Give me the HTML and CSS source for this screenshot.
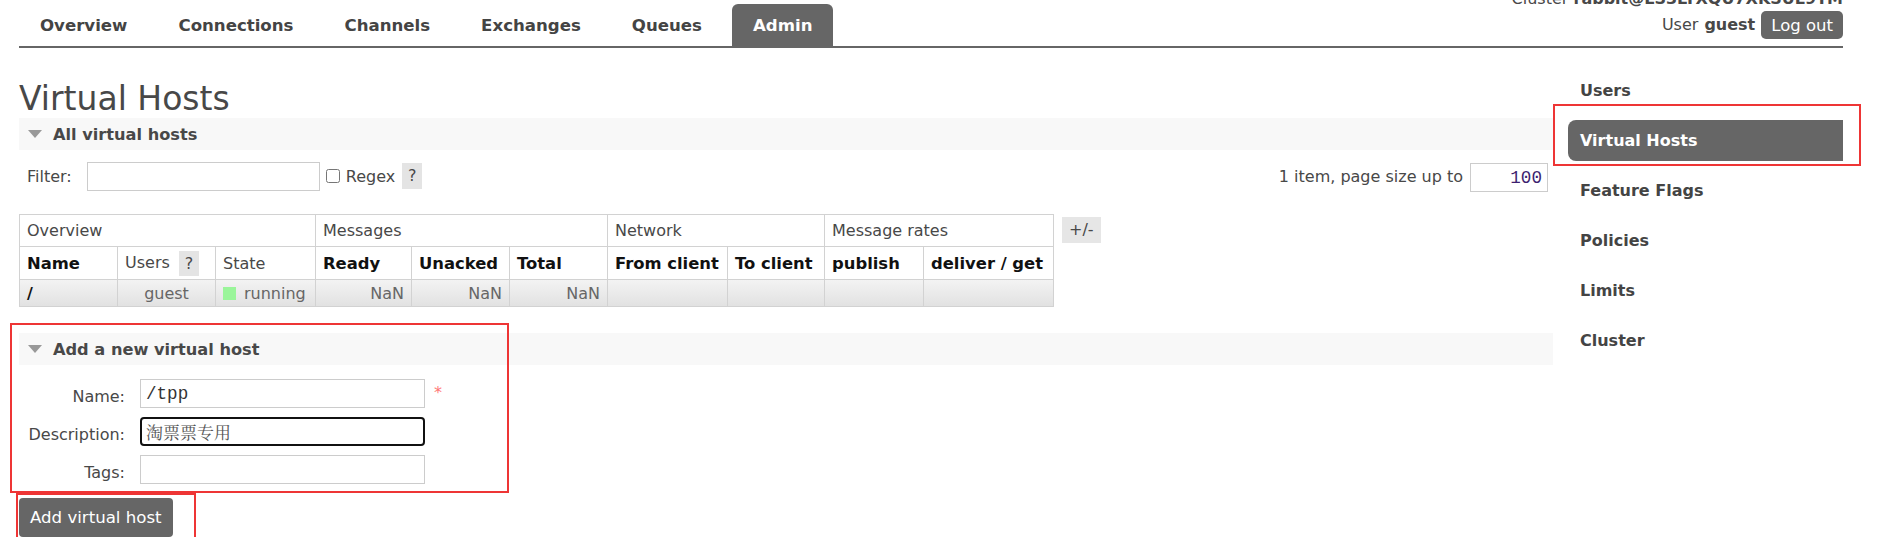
FILE: index.html
```html
<!DOCTYPE html>
<html lang="en">
<head>
<meta charset="utf-8">
<title>RabbitMQ Management: Virtual Hosts</title>
<link rel="stylesheet" href="styles.css">
</head>
<body>
<div class="page">
  <header class="header">
    <ul class="menu">
      <li><a>Overview</a></li>
      <li><a>Connections</a></li>
      <li><a>Channels</a></li>
      <li><a>Exchanges</a></li>
      <li><a>Queues</a></li>
      <li class="active"><a>Admin</a></li>
    </ul>
    <div class="login">
      <div class="cluster">Cluster <b>rabbit@LS3LTXQU7XKSUL9TM</b></div>
      <div class="user">User <b>guest</b> <button class="logout" type="button">Log out</button></div>
    </div>
  </header>

  <div class="content">
    <main class="main">
      <h1>Virtual Hosts</h1>

      <section class="section">
        <h2 class="sect"><span class="tri"></span>All virtual hosts</h2>
        <div class="filter-row">
          <div class="filter">
            <span>Filter:</span>
            <input class="txt filter-input" type="text">
            <input class="chk" type="checkbox">
            <span>Regex</span>
            <span class="help">?</span>
          </div>
          <div class="pager">
            <span>1 item, page size up to</span>
            <input class="txt pager-input" type="text" value="100">
          </div>
        </div>

        <div class="table-row">
          <table class="list">
            <colgroup>
              <col class="w98"><col class="w98"><col class="w100"><col class="w96"><col class="w98">
              <col class="w98"><col class="w120"><col class="w97"><col class="w99"><col class="w130">
            </colgroup>
            <thead>
              <tr class="grp">
                <th colspan="3">Overview</th>
                <th colspan="3">Messages</th>
                <th colspan="2">Network</th>
                <th colspan="2">Message rates</th>
              </tr>
              <tr class="cols">
                <th>Name</th>
                <th class="plain">Users <span class="help in">?</span></th>
                <th class="plain">State</th>
                <th>Ready</th>
                <th>Unacked</th>
                <th>Total</th>
                <th>From client</th>
                <th>To client</th>
                <th>publish</th>
                <th>deliver / get</th>
              </tr>
            </thead>
            <tbody>
              <tr>
                <td class="nm">/</td>
                <td class="c">guest</td>
                <td><span class="sq"></span>running</td>
                <td class="r">NaN</td>
                <td class="r">NaN</td>
                <td class="r">NaN</td>
                <td></td><td></td><td></td><td></td>
              </tr>
            </tbody>
          </table>
          <span class="plusminus">+/-</span>
        </div>
      </section>

      <section class="section add">
        <h2 class="sect"><span class="tri"></span>Add a new virtual host</h2>
        <div class="form">
          <label class="lbl">Name:</label>
          <input class="txt field" type="text" value="/tpp">
          <span class="req">*</span>
          <label class="lbl">Description:</label>
          <input class="txt field focus" type="text" value="淘票票专用">
          <span></span>
          <label class="lbl">Tags:</label>
          <input class="txt field" type="text">
          <span></span>
        </div>
        <span class="mark mark-form"></span>
      </section>

      <div class="btn-wrap">
        <button class="add-btn" type="button">Add virtual host</button>
        <span class="mark mark-btn"></span>
      </div>
    </main>

    <nav class="side">
      <ul>
        <li><a>Users</a></li>
        <li class="active"><a>Virtual Hosts</a><span class="mark mark-side"></span></li>
        <li><a>Feature Flags</a></li>
        <li><a>Policies</a></li>
        <li><a>Limits</a></li>
        <li><a>Cluster</a></li>
      </ul>
    </nav>
  </div>
</div>
</body>
</html>
```

FILE: styles.css
```css
* { box-sizing: border-box; }

body {
  margin: 0;
  font-family: "DejaVu Sans", Verdana, sans-serif;
  font-size: 16px;
  color: #484848;
  background: #fff;
  overflow: hidden;
}

.page { padding: 0 48px 0 19px; }

/* ---------- header ---------- */
.header {
  display: flex;
  justify-content: space-between;
  align-items: flex-end;
  height: 48px;
  border-bottom: 2px solid #666;
}

.menu {
  list-style: none;
  margin: 0;
  padding: 0;
  display: flex;
  gap: 9px;
}
.menu a {
  display: block;
  height: 42px;
  line-height: 43px;
  padding: 0 21px;
  font-size: 16.6px;
  font-weight: bold;
  color: #444;
  border-radius: 6px 6px 0 0;
}
.menu .active a { background: #666; color: #fff; }

.login {
  display: flex;
  flex-direction: column;
  align-items: flex-end;
  gap: 2px;
  margin-bottom: 7px;
}
.cluster { line-height: 20px; white-space: nowrap; }
.user { display: flex; align-items: center; gap: 6px; line-height: 20px; }
.logout {
  height: 28px;
  padding: 0 10px;
  border: 0;
  border-radius: 5px;
  background: #666;
  color: #fff;
  font-family: "DejaVu Sans", Verdana, sans-serif;
  font-size: 16.5px;
}

/* ---------- layout ---------- */
.content { display: flex; gap: 15px; }
.main { flex: 1; min-width: 0; }
.side { flex: none; width: 275px; padding-top: 22px; }

h1 {
  margin: 32px 0 0;
  font-size: 33px;
  line-height: 38px;
  font-weight: normal;
  color: #484848;
}

.section { position: relative; }

.sect {
  display: flex;
  align-items: center;
  gap: 11px;
  height: 32px;
  margin: 0;
  padding-left: 9px;
  background: #f8f8f8;
  font-size: 16.2px;
  font-weight: bold;
  color: #484848;
}
.tri {
  width: 0;
  height: 0;
  border-left: 7.5px solid transparent;
  border-right: 7.5px solid transparent;
  border-top: 8px solid #999;
}

/* ---------- inputs ---------- */
.txt {
  height: 29px;
  margin: 0;
  padding: 0 5px;
  border: 1px solid #ccc;
  border-radius: 0;
  background: #fff;
  font-family: "Liberation Mono", "Noto Sans CJK SC", monospace;
  font-size: 17.6px;
  color: #333;
  outline: none;
}

.filter-row {
  display: flex;
  justify-content: space-between;
  align-items: center;
  margin-top: 10px;
  padding: 0 5px 0 8px;
}
.filter { display: flex; align-items: center; }
.filter-input { width: 233px; margin: 0 6px 0 15px; }
.chk { width: 14px; height: 14px; margin: 0 6px 0 0; }
.help {
  display: inline-block;
  width: 20px;
  height: 26px;
  margin-left: 7px;
  line-height: 26px;
  text-align: center;
  background: #e4e4e4;
  color: #484848;
}
.pager { display: flex; align-items: center; gap: 7px; }
.pager-input { width: 78px; text-align: right; color: #3d1f70; margin-top: 3px; }

/* ---------- table ---------- */
.table-row {
  display: flex;
  align-items: flex-start;
  gap: 8px;
  margin-top: 22px;
}
.list {
  width: 1034px;
  table-layout: fixed;
  border-collapse: collapse;
  border: 1px solid #ccc;
}
.w96 { width: 96px; } .w97 { width: 97px; } .w98 { width: 98px; }
.w99 { width: 99px; } .w100 { width: 100px; } .w120 { width: 120px; } .w130 { width: 130px; }

.list th, .list td {
  border: 1px solid #d2d2d2;
  padding: 0 7px;
  text-align: left;
  white-space: nowrap;
  overflow: hidden;
}
.list .grp th { height: 32px; font-weight: normal; color: #484848; }
.list .cols th { height: 33px; font-size: 16.4px; font-weight: bold; color: #111; }
.list .cols th.plain { font-size: 16px; font-weight: normal; color: #484848; }
.help.in { height: 25px; line-height: 25px; vertical-align: middle; margin-left: 4px; }

.list tbody tr { background: linear-gradient(#f3f3f3, #e1e1e1); }
.list td { height: 27px; color: #666; }
.list td.nm { font-weight: bold; color: #111; }
.list td.c { text-align: center; }
.list td.r { text-align: right; }
.sq {
  display: inline-block;
  width: 13px;
  height: 13px;
  margin-right: 8px;
  vertical-align: -1px;
  background: #9af59a;
}

.plusminus {
  margin-top: 3px;
  height: 26px;
  line-height: 26px;
  padding: 0 7px;
  background: #e6e6e6;
}

/* ---------- add form ---------- */
.add { margin-top: 26px; }
.form {
  display: grid;
  grid-template-columns: 106px 285px auto;
  column-gap: 15px;
  row-gap: 9px;
  margin-top: 14px;
  justify-content: start;
  align-items: start;
}
.lbl { text-align: right; padding-top: 8px; line-height: 20px; }
.field { width: 285px; }
.field.focus {
  border: 2px solid #111;
  border-radius: 4px;
  padding: 0 4px;
  font-family: "Noto Serif CJK SC", "Noto Sans CJK SC", serif;
  font-size: 17px;
  color: #555;
}
.req { color: #f77; padding-top: 4px; margin-left: -6px; }

.btn-wrap { position: relative; display: inline-block; margin-top: 14px; }
.add-btn {
  display: block;
  height: 39px;
  padding: 0 11px;
  border: 0;
  border-radius: 4px;
  background: #666;
  color: #fff;
  font-family: "DejaVu Sans", Verdana, sans-serif;
  font-size: 16.6px;
}

/* ---------- sidebar ---------- */
.side ul { list-style: none; margin: 0; padding: 0; }
.side li { position: relative; margin-bottom: 9px; }
.side a {
  display: block;
  height: 41px;
  line-height: 41px;
  padding: 0 12px;
  font-size: 16px;
  font-weight: bold;
  color: #444;
}
.side .active a { background: #666; color: #fff; border-radius: 8px 0 0 8px; }

/* ---------- red annotation boxes ---------- */
.mark {
  position: absolute;
  border: 2px solid #ee3535;
  pointer-events: none;
}
.mark-form { left: -9px; top: -10px; width: 499px; height: 170px; }
.mark-btn { left: -3px; top: -5px; right: -23px; bottom: -2px; }
.mark-side { left: -15px; top: -16px; right: -18px; bottom: -5px; }
```
